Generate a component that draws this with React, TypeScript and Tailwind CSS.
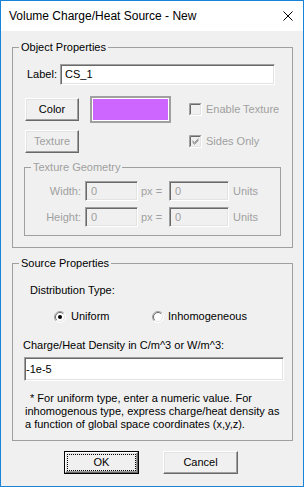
const raised =
  'border border-t-white border-l-white border-r-[#696969] border-b-[#696969] shadow-[inset_-1px_-1px_0_#a0a0a0,inset_1px_1px_0_#e3e3e3]';
const sunken =
  'border border-t-[#a0a0a0] border-l-[#a0a0a0] border-r-white border-b-white shadow-[inset_1px_1px_0_#696969,inset_-1px_-1px_0_#e3e3e3]';

function Checkbox({ checked }: { checked?: boolean }) {
  return (
    <svg width="13" height="13" viewBox="0 0 13 13" className="shrink-0">
      <rect x="0" y="0" width="13" height="13" fill="#f0f0f0" />
      <path d="M0.5 12.5V0.5H12.5" stroke="#a0a0a0" fill="none" />
      <path d="M1.5 11.5V1.5H11.5" stroke="#696969" fill="none" />
      <path d="M0.5 12.5H12.5V0.5" stroke="#ffffff" fill="none" />
      <path d="M1.5 11.5H11.5V1.5" stroke="#e3e3e3" fill="none" />
      {checked && (
        <path d="M3.5 5.5L5.5 7.5L9.5 3.5M3.5 6.5L5.5 8.5L9.5 4.5M3.5 7.5L5.5 9.5L9.5 5.5" stroke="#a0a0a0" fill="none" />
      )}
    </svg>
  );
}

function Radio({ checked }: { checked?: boolean }) {
  return (
    <svg width="12" height="12" viewBox="0 0 12 12" className="shrink-0">
      <circle cx="6" cy="6" r="5.5" fill="#ffffff" />
      <path d="M2.1 9.9A5.5 5.5 0 0 1 9.9 2.1" stroke="#a0a0a0" fill="none" />
      <path d="M2.8 9.2A4.5 4.5 0 0 1 9.2 2.8" stroke="#696969" fill="none" />
      <path d="M9.9 2.1A5.5 5.5 0 0 1 2.1 9.9" stroke="#ffffff" fill="none" />
      <path d="M9.2 2.8A4.5 4.5 0 0 1 2.8 9.2" stroke="#e3e3e3" fill="none" />
      {checked && <circle cx="6" cy="6" r="2" fill="#000000" />}
    </svg>
  );
}

function GeometryRow({ label, top }: { label: string; top: string }) {
  return (
    <div className={`${top} flex h-[20px] items-center text-[#a0a0a0]`}>
      <span className="w-[56px] text-right">{label}</span>
      <div className={`ml-[4px] flex h-[20px] w-[53px] items-center bg-[#f0f0f0] pl-[5px] ${sunken}`}>0</div>
      <span className="ml-[3px] w-[28px]">px =</span>
      <div className={`flex h-[20px] w-[60px] items-center bg-[#f0f0f0] pl-[5px] ${sunken}`}>0</div>
      <span className="ml-[4px]">Units</span>
    </div>
  );
}

export default function App() {
  return (
    <div className="flex h-[487px] w-[304px] flex-col border border-[#1883d7] bg-[#f0f0f0] font-['Liberation_Sans',Arial,sans-serif] text-[11px] leading-[13px] text-black">
      <div className="flex h-[30px] shrink-0 items-center justify-between bg-white pl-[8px] pr-[10px]">
        <span className="text-[12px]">Volume Charge/Heat Source - New</span>
        <svg width="10" height="10" viewBox="0 0 10 10">
          <path d="M0.5 0.5L9.5 9.5M9.5 0.5L0.5 9.5" stroke="#000" strokeWidth="1" />
        </svg>
      </div>

      <div className="flex flex-col pl-[11px] pr-[10px]">
        <fieldset className="mt-[10px] border border-[#a0a0a0] pb-[11px]">
          <legend className="ml-[6px] px-[2px]">Object Properties</legend>

          <div className="mt-[10px] flex items-center pl-[14px]">
            <span className="w-[33px]">Label:</span>
            <div className={`flex h-[21px] w-[215px] items-center bg-white pl-[4px] ${sunken}`}>CS_1</div>
          </div>

          <div className="mt-[11px] flex h-[27px] items-center pl-[12px]">
            <div className={`flex h-[23px] w-[54px] items-center justify-center bg-[#f0f0f0] ${raised}`}>Color</div>
            <div className="ml-[11px] h-[27px] w-[81px] border-2 border-[#a0a0a0] bg-white p-[1px]">
              <div className="h-full w-full bg-[#cc66ff]" />
            </div>
            <div className="ml-[18px]">
              <Checkbox />
            </div>
            <span className="ml-[4px] text-[#a0a0a0]">Enable Texture</span>
          </div>

          <div className="mt-[7px] flex h-[23px] items-center pl-[12px]">
            <div className={`flex h-[23px] w-[54px] items-center justify-center bg-[#f0f0f0] text-[#a0a0a0] ${raised}`}>
              Texture
            </div>
            <div className="ml-[110px]">
              <Checkbox checked />
            </div>
            <span className="ml-[4px] text-[#a0a0a0]">Sides Only</span>
          </div>

          <fieldset className="ml-[11px] mt-[8px] w-[257px] border border-[#a0a0a0] pb-[8px]">
            <legend className="ml-[6px] px-[2px] text-[#a0a0a0]">Texture Geometry</legend>
            <GeometryRow label="Width:" top="mt-[7px]" />
            <GeometryRow label="Height:" top="mt-[6px]" />
          </fieldset>
        </fieldset>

        <fieldset className="mt-[9px] border border-[#a0a0a0] pb-[9px]">
          <legend className="ml-[6px] px-[2px]">Source Properties</legend>

          <p className="mt-[14px] pl-[17px]">Distribution Type:</p>

          <div className="mt-[13px] flex items-center pl-[41px]">
            <Radio checked />
            <span className="ml-[5px] w-[81px]">Uniform</span>
            <Radio />
            <span className="ml-[4px]">Inhomogeneous</span>
          </div>

          <p className="mt-[16px] pl-[10px]">Charge/Heat Density in C/m^3 or W/m^3:</p>

          <div className={`ml-[11px] mt-[5px] flex h-[24px] w-[260px] items-center bg-white pl-[1px] ${sunken}`}>-1e-5</div>

          <p className="mt-[11px] pl-[12px] indent-[5px]">
            * For uniform type, enter a numeric value. For
            <br />
            inhomogenous type, express charge/heat density as
            <br />
            a function of global space coordinates (x,y,z).
          </p>
        </fieldset>

        <div className="mt-[10px] flex">
          <div className="ml-[52px] flex h-[23px] w-[75px] border border-black">
            <div className={`flex flex-1 bg-[#f0f0f0] ${raised}`}>
              <div className="m-[1px] flex flex-1 items-center justify-center border border-dotted border-black">OK</div>
            </div>
          </div>
          <div className={`ml-[24px] flex h-[23px] w-[75px] items-center justify-center bg-[#f0f0f0] ${raised}`}>Cancel</div>
        </div>
      </div>
    </div>
  );
}
